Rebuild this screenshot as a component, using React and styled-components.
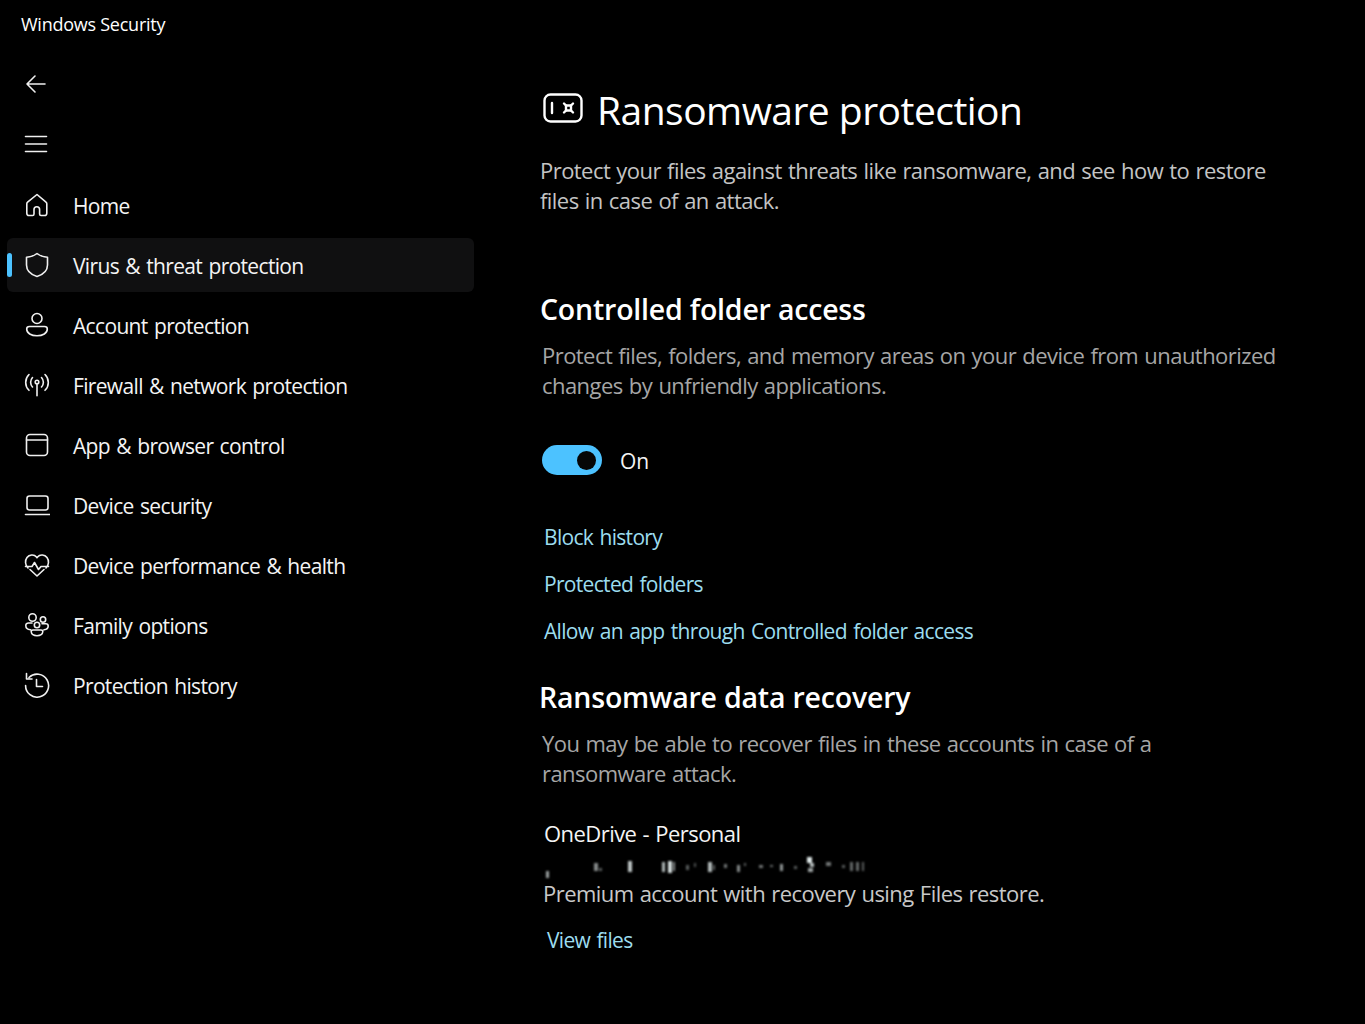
import React from 'react';
import styled, { createGlobalStyle } from 'styled-components';

const Global = createGlobalStyle`
    html, body {
        margin: 0;
        background: #000;
    }
    body {
        font-family: "Open Sans", "Noto Sans", "Liberation Sans", sans-serif;
        color: #fff;
    }
`

const Window = styled.div`
    width: 1365px;
    height: 1024px;
    background: #000;
    overflow: hidden;
`

const TitleBar = styled.div`
    height: 48px;
    padding-left: 21px;
    display: flex;
    align-items: center;
    font-size: 18px;
    color: #fff;
    letter-spacing: -0.25px;
`

const Columns = styled.div`
    display: grid;
    grid-template-columns: 480px 1fr;
`

const Sidebar = styled.div`
    display: flex;
    flex-direction: column;
    padding-top: 6px;
`

const ToolRow = styled.div`
    height: 60px;
    padding-left: 23px;
    display: flex;
    align-items: center;
`

const Nav = styled.div`
    display: flex;
    flex-direction: column;
    margin-top: 1px;
`

const NavItem = styled.div`
    position: relative;
    height: 54px;
    margin: 3px 6px 3px 7px;
    padding-left: 17px;
    display: flex;
    align-items: center;
    border-radius: 6px;
    background: ${props => props.$active ? '#101011' : 'transparent'};
`

const Indicator = styled.div`
    position: absolute;
    left: 0;
    top: 15px;
    width: 5px;
    height: 24px;
    border-radius: 3px;
    background: #4cc2ff;
`

const NavLabel = styled.span`
    margin-left: 23px;
    font-size: 21px;
    line-height: 30px;
    letter-spacing: -0.66px;
    word-spacing: 1.5px;
    color: #f4f4f4;
    position: relative;
    top: 1px;
`

const Icon = styled.svg`
    width: 26px;
    height: 26px;
    flex: none;
    fill: none;
    stroke: #f0f0f0;
    stroke-width: 1.6;
    stroke-linecap: round;
    stroke-linejoin: round;
`

const Main = styled.div`
    padding-top: 29px;
    padding-left: 60px;
    width: 760px;
`

const TitleRow = styled.div`
    display: flex;
    align-items: center;
    height: 66px;
    margin-left: 3px;
`

const TitleIcon = styled.svg`
    width: 40px;
    height: 32px;
    margin-bottom: 5px;
    flex: none;
    fill: none;
    stroke: #fff;
    stroke-width: 2.4;
    stroke-linecap: round;
    stroke-linejoin: round;
`

const Title = styled.h1`
    margin: 0 0 0 14px;
    font-size: 39px;
    line-height: 50px;
    font-weight: 400;
    letter-spacing: -0.53px;
    color: #fff;
`

const Text = styled.p`
    margin: ${props => props.$top || 0}px 0 0 ${props => props.$left || 0}px;
    font-size: 22px;
    line-height: 30px;
    letter-spacing: -0.55px;
    word-spacing: 1px;
    color: ${props => props.$color || '#a6a6a6'};
    white-space: nowrap;
`

const Heading = styled.h2`
    margin: ${props => props.$top}px 0 0 ${props => props.$left || 0}px;
    font-size: 28.5px;
    line-height: 36px;
    font-weight: 600;
    letter-spacing: -0.2px;
    color: #fff;
`

const ToggleRow = styled.div`
    display: flex;
    align-items: center;
    margin: 45px 0 0 2px;
    height: 30px;
`

const Toggle = styled.div`
    position: relative;
    width: 60px;
    height: 30px;
    border-radius: 15px;
    background: #4cc2ff;
`

const Knob = styled.div`
    position: absolute;
    right: 6px;
    top: 5.5px;
    width: 19px;
    height: 19px;
    border-radius: 50%;
    background: #060606;
`

const ToggleLabel = styled.span`
    margin: 2px 0 0 18px;
    font-size: 21px;
    color: #f4f4f4;
`

const LinkList = styled.div`
    display: flex;
    flex-direction: column;
    gap: 17px;
    margin: 47px 0 0 4px;
`

const Link = styled.a`
    display: block;
    margin-left: ${props => props.$left || 0}px;
    margin-top: ${props => props.$top || 0}px;
    font-size: 21px;
    line-height: 30px;
    letter-spacing: -0.68px;
    word-spacing: 1.5px;
    color: #9cdcee;
    white-space: nowrap;
`

const Smudge = styled.svg`
    display: block;
    width: 325px;
    height: 30px;
    margin-left: 4px;
    filter: blur(0.8px);
`

const navItems = [
    {
        label: 'Home',
        icon: <path d="M13 2.5 3.6 10.2c-.5.4-.8 1-.8 1.6v9.4c0 1.3 1 2.3 2.3 2.3h3.5c.8 0 1.4-.6 1.4-1.4v-4.600c0-1.500 1.200-2.700 2.800-2.700s2.800 1.200 2.800 2.700v4.600c0 .8.600 1.400 1.400 1.400h3.500c1.300 0 2.300-1 2.300-2.300v-9.400c0-.6-.3-1.200-.8-1.600z" />,
    },
    {
        label: 'Virus & threat protection',
        active: true,
        icon: <path d="M13 1.5c3 2.400 6.200 3.500 10.500 3.700v7.800c0 5.500-3.500 9.300-10.500 11.500C6 22.300 2.500 18.500 2.500 13V5.200C6.800 5 10 3.900 13 1.500z" />,
    },
    {
        label: 'Account protection',
        icon: (
            <>
                <circle cx="13" cy="6.5" r="5" />
                <path d="M5.5 14.5h15c1.600 0 2.800 1.100 2.800 2.500 0 4.300-4.600 6.800-10.300 6.800S2.700 21.300 2.700 17c0-1.400 1.200-2.500 2.800-2.500z" />
            </>
        ),
    },
    {
        label: 'Firewall & network protection',
        icon: (
            <>
                <circle cx="13" cy="10" r="1.8" />
                <path d="M13 11.800v12M8.500 5.500c-2.500 2.700-2.500 6.800 0 9.500M17.500 5.500c2.500 2.700 2.500 6.800 0 9.500M5 2.500C.6 6.800.6 14 5 18.300M21 2.500c4.400 4.300 4.400 11.500 0 15.800" />
            </>
        ),
    },
    {
        label: 'App & browser control',
        icon: (
            <>
                <rect x="2.5" y="2.5" width="21" height="21" rx="3.5" />
                <path d="M2.5 8h21" />
            </>
        ),
    },
    {
        label: 'Device security',
        icon: (
            <>
                <rect x="3" y="4" width="21" height="14" rx="2.5" />
                <path d="M1.5 22.5h24" />
            </>
        ),
    },
    {
        label: 'Device performance & health',
        icon: <path d="M4 16C1 13 .8 8.500 3 5.500s7-3.500 9.500-.5l.5.700.5-.7c2.500-3 7.300-2.500 9.500.5s2 7.500-1 10.500M1.500 14.500h6.500l2.500-4 4 7 2.500-3h7.500M6 17.500l7 6.500 7-6.500" />,
    },
    {
        label: 'Family options',
        icon: (
            <>
                <circle cx="8.5" cy="5.5" r="3.7" />
                <circle cx="19" cy="7.5" r="2.7" />
                <circle cx="13" cy="13" r="2.7" />
                <path d="M8 11H4.500C3 11 1.800 12 1.800 13.500c0 2.200 1.700 4 4.700 4.300M18 11.800h3.800c1.300 0 2.400 1 2.400 2.200 0 2-1.500 3.500-4.200 3.800M9 18h8c1 0 1.800.7 1.800 1.600 0 2.400-2.500 4.100-5.800 4.100s-5.800-1.700-5.800-4.100C7.200 18.700 8 18 9 18z" />
            </>
        ),
    },
    {
        label: 'Protection history',
        icon: <path d="M5 5.500A11.500 11.500 0 1 1 1.600 13.500M2.500 1.500v5.500H8M12.500 7.500v7h6" />,
    },
];

const smudges = [
    [2, 23, 3, 7, .7], [50, 15, 4, 8, .6], [55, 20, 3, 3, .4], [84, 13, 4, 11, .85],
    [118, 14, 3, 10, .8], [124, 13, 4, 12, .95], [129, 14, 2, 9, .6], [142, 17, 3, 5, .4],
    [150, 15, 2, 4, .35], [164, 14, 4, 10, .8], [169, 17, 2, 5, .4], [180, 16, 3, 4, .5],
    [193, 17, 3, 7, .6], [200, 15, 2, 3, .4], [215, 17, 4, 3, .5], [226, 17, 3, 2, .45],
    [236, 16, 3, 7, .65], [250, 18, 3, 3, .4], [263, 9, 5, 6, 1], [266, 15, 4, 4, .8],
    [264, 20, 5, 4, .7], [282, 14, 5, 4, .5], [298, 17, 3, 3, .4], [306, 14, 3, 9, .45],
    [312, 14, 3, 9, .45], [318, 14, 2, 9, .4],
];

function App() {
    return (
        <Window>
            <Global />
            <TitleBar>Windows Security</TitleBar>
            <Columns>
                <Sidebar>
                    <ToolRow>
                        <Icon viewBox="0 0 26 26">
                            <path d="M22 13H4M12 5l-8 8 8 8" />
                        </Icon>
                    </ToolRow>
                    <ToolRow>
                        <Icon viewBox="0 0 26 26">
                            <path d="M2.5 5.5h21M2.5 13h21M2.5 20.5h21" />
                        </Icon>
                    </ToolRow>
                    <Nav>
                        {navItems.map(item => (
                            <NavItem key={item.label} $active={item.active}>
                                {item.active && <Indicator />}
                                <Icon viewBox="0 0 26 26">{item.icon}</Icon>
                                <NavLabel>{item.label}</NavLabel>
                            </NavItem>
                        ))}
                    </Nav>
                </Sidebar>
                <Main>
                    <TitleRow>
                        <TitleIcon viewBox="0 0 40 32">
                            <rect x="1.5" y="2.5" width="37" height="27" rx="6" />
                            <path d="M9 11v10" />
                            <rect x="23" y="13.5" width="5" height="5" />
                            <path d="M21 11.500l2 2M30 11.500l-2 2M21 20.500l2-2M30 20.500l-2-2" />
                        </TitleIcon>
                        <Title>Ransomware protection</Title>
                    </TitleRow>
                    <Text $top={12} $color="#c4c4c4">
                        Protect your files against threats like ransomware, and see how to restore<br />
                        files in case of an attack.
                    </Text>
                    <Heading $top={76}>Controlled folder access</Heading>
                    <Text $top={13} $left={2}>
                        Protect files, folders, and memory areas on your device from unauthorized<br />
                        changes by unfriendly applications.
                    </Text>
                    <ToggleRow>
                        <Toggle><Knob /></Toggle>
                        <ToggleLabel>On</ToggleLabel>
                    </ToggleRow>
                    <LinkList>
                        <Link>Block history</Link>
                        <Link>Protected folders</Link>
                        <Link>Allow an app through Controlled folder access</Link>
                    </LinkList>
                    <Heading $top={33} $left={-1}>Ransomware data recovery</Heading>
                    <Text $top={13} $left={2}>
                        You may be able to recover files in these accounts in case of a<br />
                        ransomware attack.
                    </Text>
                    <Text $top={30} $left={4} $color="#f4f4f4">OneDrive - Personal</Text>
                    <Smudge viewBox="0 0 325 30">
                        {smudges.map(([x, y, w, h, o]) => (
                            <rect key={x} x={x} y={y} width={w} height={h} fill="#dfe8e8" opacity={o} />
                        ))}
                    </Smudge>
                    <Text $left={3} $color="#c8c8c8">Premium account with recovery using Files restore.</Text>
                    <Link as="div" $left={7} $top={17}>View files</Link>
                </Main>
            </Columns>
        </Window>
    );
}

export default App;
